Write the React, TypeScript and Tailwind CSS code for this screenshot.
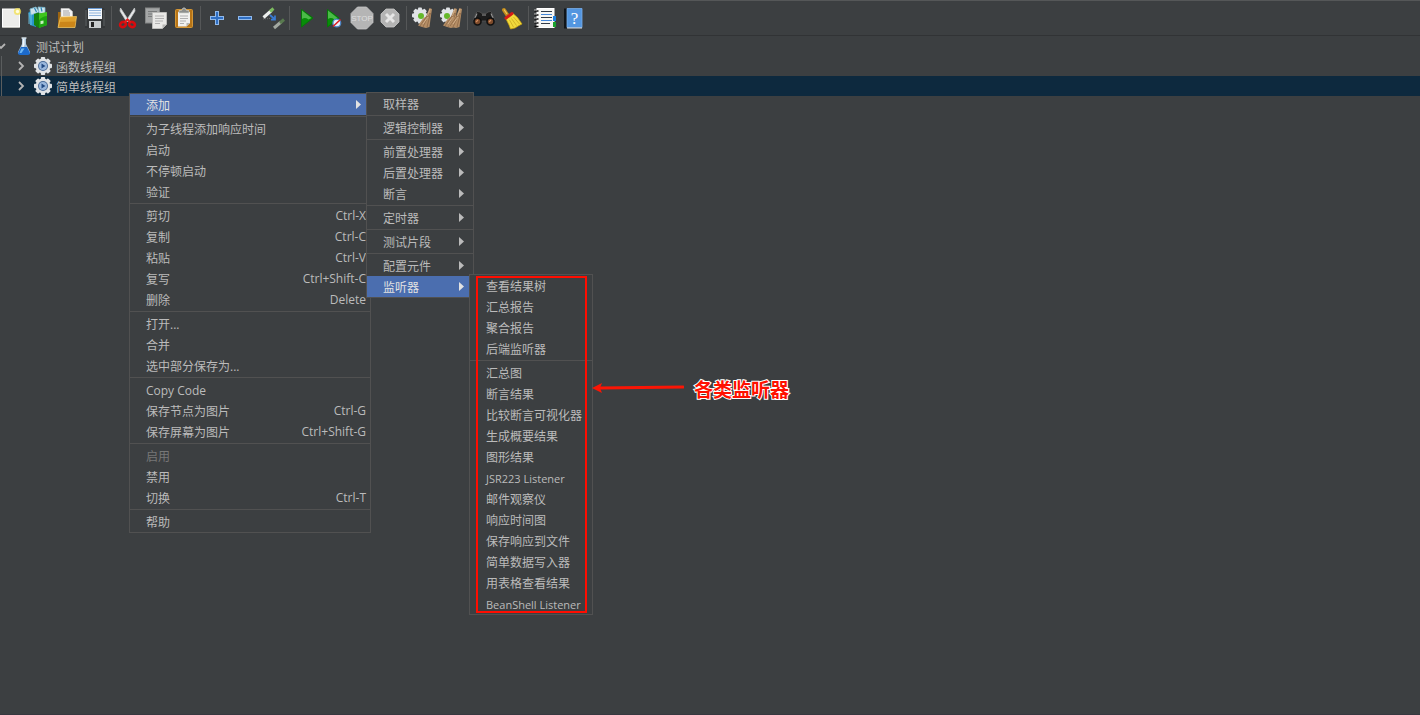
import type { ReactNode } from "react";
import clsx from "clsx";

interface MenuEntry {
  label: string;
  shortcut?: string;
  submenu?: boolean;
  selected?: boolean;
  disabled?: boolean;
  compact?: boolean;
}

const NODE_MENU: MenuEntry[][] = [
  [{ label: "添加", submenu: true, selected: true }],
  [{ label: "为子线程添加响应时间" }, { label: "启动" }, { label: "不停顿启动" }, { label: "验证" }],
  [
    { label: "剪切", shortcut: "Ctrl-X" },
    { label: "复制", shortcut: "Ctrl-C" },
    { label: "粘贴", shortcut: "Ctrl-V" },
    { label: "复写", shortcut: "Ctrl+Shift-C" },
    { label: "删除", shortcut: "Delete" },
  ],
  [{ label: "打开..." }, { label: "合并" }, { label: "选中部分保存为..." }],
  [
    { label: "Copy Code" },
    { label: "保存节点为图片", shortcut: "Ctrl-G" },
    { label: "保存屏幕为图片", shortcut: "Ctrl+Shift-G" },
  ],
  [{ label: "启用", disabled: true }, { label: "禁用" }, { label: "切换", shortcut: "Ctrl-T" }],
  [{ label: "帮助" }],
];

const ADD_MENU: MenuEntry[][] = [
  [{ label: "取样器", submenu: true }],
  [{ label: "逻辑控制器", submenu: true }],
  [
    { label: "前置处理器", submenu: true },
    { label: "后置处理器", submenu: true },
    { label: "断言", submenu: true },
  ],
  [{ label: "定时器", submenu: true }],
  [{ label: "测试片段", submenu: true }],
  [
    { label: "配置元件", submenu: true },
    { label: "监听器", submenu: true, selected: true },
  ],
];

const LISTENER_MENU: MenuEntry[][] = [
  [{ label: "查看结果树" }, { label: "汇总报告" }, { label: "聚合报告" }, { label: "后端监听器" }],
  [
    { label: "汇总图" },
    { label: "断言结果" },
    { label: "比较断言可视化器" },
    { label: "生成概要结果" },
    { label: "图形结果" },
    { label: "JSR223 Listener", compact: true },
    { label: "邮件观察仪" },
    { label: "响应时间图" },
    { label: "保存响应到文件" },
    { label: "简单数据写入器" },
    { label: "用表格查看结果" },
    { label: "BeanShell Listener", compact: true },
  ],
];

const GEAR_TEETH = [0, 45, 90, 135, 180, 225, 270, 315];

function Gear({ cx, cy, r }: { cx: number; cy: number; r: number }) {
  return (
    <g fill="#e0e3e6">
      {GEAR_TEETH.map((a) => (
        <rect
          key={a}
          x={cx - r * 0.24}
          y={cy - r}
          width={r * 0.48}
          height={r}
          rx="0.8"
          transform={`rotate(${a} ${cx} ${cy})`}
        />
      ))}
      <circle cx={cx} cy={cy} r={r * 0.82} />
    </g>
  );
}

function StrawBroom({ x = 0 }: { x?: number }) {
  return (
    <g transform={`translate(${x} 0)`}>
      <path d="M20.500 4 23 5l-1.500 10-1 8-3.500 1-4-1-4-1.500 5-7 3-2z" fill="#b58e66" />
      <path d="m20 9-9 13M20.500 9l-6.500 14M21.500 9l-3.500 14" stroke="#866141" strokeWidth=".7" />
      <path d="m21 5-2.500 7M19 13l-5 7" stroke="#d9b994" strokeWidth=".8" />
    </g>
  );
}

// Every toolbar drawing uses the 28px cell of its button as canvas.
const ICONS: Record<string, ReactNode> = {
  new: (
    <>
      <rect x="5.500" y="5" width="17" height="18" fill="#ededeb" stroke="#fff" />
      <path d="M5.500 23.500h17" stroke="#bdbdb8" />
      <circle cx="20.500" cy="7.500" r="3.600" fill="#f3e04f" opacity=".75" />
      <circle cx="20.500" cy="7.500" r="1.700" fill="#fffde0" />
    </>
  ),
  templates: (
    <>
      <path d="M3.500 8 11 6v17l-6-2z" fill="#2a95c9" />
      <path d="M4 9v11M6 9v12" stroke="#7cd0ef" strokeWidth=".8" />
      <path d="m5 5 6-2 3 5-8 3zM13 3l7 .5V10l-6-1z" fill="#cfe3ea" stroke="#78b9d2" strokeWidth=".8" />
      <path d="m9.500 4 2 4M16 3.500l1 4" stroke="#2785b7" strokeWidth="1.200" />
      <path d="M9 10 14 8.500V24l-5-3z" fill="#14820e" />
      <path d="m14 9.500 8-1.500v13l-8 3z" fill="#3fc51e" />
      <path d="M14 16q4-4 8-4v9l-8 3z" fill="#1ea312" />
      <path d="m15.500 17 3-.5v3l-3 .8z" fill="#c9efbf" />
    </>
  ),
  open: (
    <>
      <path d="M5 22V8h3l1 2h11v12z" fill="#9c6512" />
      <path d="M8 4.500h8l3.500 3V16H8z" fill="#f4f4f4" stroke="#c9c9c9" strokeWidth=".6" />
      <path d="M10 7h6M10 9h7M10 11h7" stroke="#999" strokeWidth=".9" />
      <path d="M7.500 13 23.500 12.500 22 23.500H5z" fill="#dfa02d" stroke="#f3cb69" strokeWidth=".7" />
      <path d="m7 18 15.500-.5-1 5.500H6z" fill="#cc8619" />
    </>
  ),
  save: (
    <>
      <path d="M5.500 4h17L24 5.500V24H4V5.500z" fill="#333638" />
      <path d="M5 6v16M23 6v16" stroke="#6d7173" strokeWidth=".8" />
      <rect x="7" y="4" width="14" height="11" fill="#f2f6fa" />
      <path d="M8 6.500h12M8 9h12M8 11.500h12" stroke="#90b4dd" />
      <path d="M7 4.500h14" stroke="#6999d3" />
      <rect x="8" y="17" width="12" height="7" fill="#c7cbcd" />
      <rect x="10" y="18" width="3" height="5" fill="#222" />
    </>
  ),
  cut: (
    <>
      <path d="m6.500 4 8.500 13-2.500.5L6 7zM20.500 4 12 17l2.500.5L21 7z" fill="#e9ebec" stroke="#c4c6c8" strokeWidth=".8" />
      <ellipse cx="9" cy="20.500" rx="3" ry="2.500" fill="none" stroke="#d80b0e" strokeWidth="2.600" transform="rotate(-25 9 20.500)" />
      <ellipse cx="18" cy="20.500" rx="3" ry="2.500" fill="none" stroke="#d80b0e" strokeWidth="2.600" transform="rotate(25 18 20.500)" />
      <path d="m10.500 18.500 3-3 3 3" fill="none" stroke="#e51b1b" strokeWidth="2" />
    </>
  ),
  copy: (
    <>
      <rect x="3.500" y="4" width="14" height="15" fill="#a4a6a6" stroke="#858787" />
      <path d="M6 7.500h9M6 10h6M6 12.500h5" stroke="#747676" strokeWidth=".9" />
      <path d="M10.500 8.500h14v12l-4 4h-10z" fill="#e9e9e7" stroke="#bcbcba" />
      <path d="M13 12h9M13 14.500h9M13 17h8M13 19.500h5" stroke="#a9a9a9" strokeWidth=".9" />
      <path d="M20.500 24.500v-4h4z" fill="#b5b5b3" />
    </>
  ),
  paste: (
    <>
      <rect x="5.500" y="5.500" width="17" height="18" rx="1" fill="#b87517" stroke="#d39635" />
      <path d="M8 8h12v11l-3.500 3.500H8z" fill="#f1f1ef" />
      <path d="M10 12h8M10 14.500h8M10 17h6M10 19.500h4" stroke="#a8a8a8" strokeWidth=".9" />
      <path d="M16.500 22.500V19H20z" fill="#b6b6b4" />
      <path d="M9 9V6.500h2.500L13 4h2l1.500 2.500H19V9z" fill="#8c8f8d" stroke="#d0d2cf" strokeWidth=".7" />
    </>
  ),
  expand: (
    <>
      <path d="M14 7v14M7 14h14" stroke="#8fb9ec" strokeWidth="4" />
      <path d="M14 8v12M8 14h12" stroke="#2f6fc4" strokeWidth="2" />
    </>
  ),
  collapse: (
    <>
      <path d="M7 14h14" stroke="#8fb9ec" strokeWidth="4" />
      <path d="M8 14h12" stroke="#2f6fc4" strokeWidth="2" />
    </>
  ),
  toggle: (
    <>
      <path d="m4.500 13.500 8-7" stroke="#edf0ee" strokeWidth="3" />
      <path d="m11 7.500 3.500-3" stroke="#7cbb5f" strokeWidth="3" />
      <path d="m11 11 5 4.500m0-4v4.200h-4" fill="none" stroke="#397bd5" strokeWidth="1.700" />
      <path d="m4 15 7-.5" stroke="#777" strokeWidth=".9" strokeDasharray="1 1" />
      <path d="m15 24 7-6" stroke="#a2a8a1" strokeWidth="3" />
      <path d="m21 19 4-3.500" stroke="#58794e" strokeWidth="3" />
    </>
  ),
  start: (
    <>
      <path d="m9.500 5.500 11.500 8.500-11.500 9z" fill="#078d08" stroke="#087609" />
      <path d="m10 6.500 9.500 7.500-3 1.500Q13 13 10 15z" fill="#4bbb48" />
    </>
  ),
  startNoPauses: (
    <>
      <path d="m7.500 5.500 11.500 8.500-11.500 9z" fill="#078d08" stroke="#087609" />
      <path d="m8 6.500 9.500 7.500-3 1.500Q11 13 8 15z" fill="#4bbb48" />
      <circle cx="16.800" cy="19" r="3.900" fill="#e8f0fa" stroke="#4e86c5" strokeWidth="1.300" />
      <path d="m13 22.500 7.500-7" stroke="#dd1c1c" strokeWidth="1.500" />
    </>
  ),
  stop: (
    <>
      <path d="M9.500 3h9L25 9.500v9L18.500 25h-9L3 18.500v-9z" fill="#b5b5b5" stroke="#c7c7c7" strokeWidth=".8" />
      <text
        x="14"
        y="17"
        textAnchor="middle"
        fontSize="8"
        fill="#dedede"
        fontFamily="Liberation Sans, sans-serif"
      >
        STOP
      </text>
    </>
  ),
  shutdown: (
    <>
      <path d="M10 5h8l5 5v8l-5 5h-8l-5-5v-8z" fill="#b4b4b4" stroke="#c9c9c9" strokeWidth=".8" />
      <path d="m10 10 8 8m0-8-8 8" stroke="#e6e6e6" strokeWidth="3" />
    </>
  ),
  clear: (
    <>
      <Gear cx={11} cy={11.5} r={8} />
      <circle cx="12" cy="12" r="3" fill="#65b82a" />
      <StrawBroom />
    </>
  ),
  clearAll: (
    <>
      <Gear cx={11} cy={11.5} r={8} />
      <circle cx="10" cy="12" r="3" fill="#65b82a" />
      <StrawBroom x={-3} />
      <StrawBroom x={2} />
    </>
  ),
  search: (
    <>
      <path d="M6 9q1-2.500 4-1l2 1.500h4L18 8q3-1.500 4 1l3 8-4 4-5-4h-4l-5 4-4-4z" fill="#1c1c1c" stroke="#555" strokeWidth=".8" />
      <path d="M7 9.500 5 14M21 9.500l2 4.500M12 11h4" stroke="#989898" strokeWidth="1.100" />
      <circle cx="7.500" cy="17.500" r="3.500" fill="#7c4a2a" stroke="#111" strokeWidth="1.600" />
      <circle cx="20.500" cy="17.500" r="3.500" fill="#7c4a2a" stroke="#111" strokeWidth="1.600" />
      <path d="m6 18 2-2M19 18l2-2" stroke="#d08a60" strokeWidth="1.200" />
    </>
  ),
  searchReset: (
    <>
      <path d="m6 6 4 6" stroke="#c08a1c" strokeWidth="4" strokeLinecap="round" />
      <path d="m6 5.500 3 4.500" stroke="#efc95c" strokeWidth="1.200" />
      <path d="m8 15 7-5.500 4.500 4L24 20l-3 1.500-4 2.500-4.500 1-1.500-4z" fill="#f1da3c" stroke="#caa00c" strokeWidth=".7" />
      <path d="m11.500 16 4 7M13.500 14.500l5 7M15.500 13l6 7" stroke="#c5a21c" strokeWidth=".7" />
      <path d="m8 14 6-4.500" stroke="#d31b17" strokeWidth="3" strokeLinecap="round" />
    </>
  ),
  functionHelper: (
    <>
      <rect x="6" y="4.500" width="17" height="19" fill="#f6f6f4" stroke="#fff" />
      <path d="M10 7.500h11M10 13.500h11M10 19.500h9" stroke="#333b47" />
      <path d="M10 10.500h11M10 16.500h11" stroke="#4386d8" />
      <path d="M3.500 7h4M3.500 11h4M3.500 15h4M3.500 19h4M3.500 22.500h4" stroke="#111" strokeWidth="1.600" />
      <path d="M3 6h3M3 10h3M3 14h3M3 18h3" stroke="#ddd" strokeWidth=".8" />
      <path d="M22 12h3v5h-3z" fill="#1c7fe0" />
      <path d="M22 18h3v5h-3z" fill="#1aa12d" />
    </>
  ),
  help: (
    <>
      <path d="M5 4.500h4v20H5z" fill="#101418" />
      <path d="M8 4.500h15v19H8z" fill="#5396e0" stroke="#78afea" strokeWidth=".8" />
      <path d="M8 24h15" stroke="#d6dbe0" />
      <text x="15.500" y="20" textAnchor="middle" fontSize="17" fill="#fff" fontFamily="Liberation Serif, serif">
        ?
      </text>
    </>
  ),
};

const TOOLBAR = [
  [
    { icon: "new", title: "新建" },
    { icon: "templates", title: "模板" },
    { icon: "open", title: "打开" },
    { icon: "save", title: "保存" },
  ],
  [
    { icon: "cut", title: "剪切" },
    { icon: "copy", title: "复制" },
    { icon: "paste", title: "粘贴" },
  ],
  [
    { icon: "expand", title: "全部展开" },
    { icon: "collapse", title: "全部折叠" },
    { icon: "toggle", title: "切换" },
  ],
  [
    { icon: "start", title: "启动" },
    { icon: "startNoPauses", title: "不停顿启动" },
    { icon: "stop", title: "停止" },
    { icon: "shutdown", title: "关闭" },
  ],
  [
    { icon: "clear", title: "清除" },
    { icon: "clearAll", title: "清除全部" },
  ],
  [
    { icon: "search", title: "查找" },
    { icon: "searchReset", title: "重置查找" },
  ],
  [
    { icon: "functionHelper", title: "函数助手" },
    { icon: "help", title: "帮助" },
  ],
];

function Toolbar() {
  return (
    <header className="h-9 overflow-hidden border-y border-t-[#555758] border-b-[#313335]">
      <div role="toolbar" className="-ml-[3px] flex h-full items-center">
        {TOOLBAR.map((group, i) => (
          <div key={i} className="flex items-center">
            {i > 0 && <div className="mx-0.5 h-6 w-px bg-[#555758]" />}
            {group.map((b) => (
              <button key={b.icon} type="button" title={b.title} aria-label={b.title} className="size-7">
                <svg viewBox="0 0 28 28" className="size-7" fill="none">
                  {ICONS[b.icon]}
                </svg>
              </button>
            ))}
          </div>
        ))}
      </div>
    </header>
  );
}

function Chevron({ open }: { open?: boolean }) {
  return (
    <svg viewBox="0 0 10 10" className="size-2.5 shrink-0" fill="none" stroke="#b4b4b4" strokeWidth="1.800">
      <path d={open ? "M1 3l4 4 4-4" : "M2 1l4 4-4 4"} />
    </svg>
  );
}

function FlaskIcon() {
  return (
    <svg viewBox="0 0 14 20" className="h-5 w-3.5 shrink-0">
      <path d="M5 2h4v6l4 8q.5 2-2 2H3q-2.500 0-2-2l4-8z" fill="#a9c3da" />
      <path d="M6 3h1.500v6L5 14z" fill="#f2f8fc" />
      <path d="M4 11h6l3 6q0 2-2 2H3q-2 0-2-2z" fill="#1c6acb" />
      <path d="M4.500 12.500h3l-3 4.500H2.500z" fill="#6eb7f3" />
      <path d="M4.500 2h5" stroke="#dfe8ee" strokeWidth="1.400" />
    </svg>
  );
}

function ThreadGroupIcon() {
  return (
    <svg viewBox="0 0 18 18" className="size-[18px] shrink-0">
      <Gear cx={9} cy={9} r={9} />
      <circle cx="9" cy="9" r="5" fill="#4a6b98" />
      <circle cx="9" cy="9" r="4" fill="#9bb8dd" />
      <path d="m7.500 6.500 4 2.500-4 2.500z" fill="#234b84" />
    </svg>
  );
}

function TestTree() {
  return (
    <ul role="tree">
      <li role="treeitem" aria-expanded="true">
        <div className="flex h-5 items-center">
          <div className="-ml-1 w-[21px]">
            <Chevron open />
          </div>
          <FlaskIcon />
          <span className="pt-1 pl-[5px]">测试计划</span>
        </div>
        <ul role="group">
          {["函数线程组", "简单线程组"].map((name, i) => (
            <li
              key={name}
              role="treeitem"
              aria-selected={i === 1}
              className={clsx("flex h-5 items-center", i === 1 && "bg-[#0d293e]")}
            >
              <span className="ml-px h-full w-4 border-l border-[#5a5d5e]" />
              <Chevron />
              <span className="flex items-center gap-1 pl-[7px]">
                <ThreadGroupIcon />
                <span className="pt-1">{name}</span>
              </span>
            </li>
          ))}
        </ul>
      </li>
    </ul>
  );
}

function PopupMenu({ groups, className }: { groups: MenuEntry[][]; className: string }) {
  return (
    <div role="menu" className={clsx("absolute border border-[#515151] bg-[#3c3f41]", className)}>
      {groups.map((group, i) => (
        <div key={i}>
          {i > 0 && <div role="separator" className="my-px h-px bg-[#515151]" />}
          {group.map((item) => (
            <button
              key={item.label}
              type="button"
              role="menuitem"
              disabled={item.disabled}
              className={clsx(
                "flex h-[21px] w-full items-center justify-between pr-1 pl-4 whitespace-nowrap",
                item.selected && "bg-[#4b6eaf] text-[#e2e2e2]",
                item.disabled && "text-[#777]"
              )}
            >
              <span className={clsx("pt-0.5", item.compact && "text-[11px] leading-4")}>{item.label}</span>
              {item.shortcut && <span>{item.shortcut}</span>}
              {item.submenu && (
                <svg viewBox="0 0 5 9" className="mr-[5px] h-[9px] w-[5px]" fill="currentColor">
                  <path d="M0 0v9l5-4.500z" />
                </svg>
              )}
            </button>
          ))}
        </div>
      ))}
    </div>
  );
}

function Callout() {
  return (
    <div className="absolute top-[376px] left-[592px] flex items-start gap-2.5">
      <svg viewBox="0 0 92 14" className="mt-1 h-3.5 w-[92px]">
        <path d="M8 8 91 7" stroke="#fb1505" strokeWidth="3" strokeLinecap="round" />
        <path d="M0 8 10 3 8 8l2 5z" fill="#fb1505" />
      </svg>
      <span className="text-[19px] leading-7 font-bold text-[#ff1000] [paint-order:stroke] [-webkit-text-stroke:2px_white]">
        各类监听器
      </span>
    </div>
  );
}

export default function App() {
  return (
    <div className="relative min-h-screen overflow-hidden border-b border-[#37373f] bg-[#3c3f41] font-['Open_Sans','Noto_Sans_CJK_SC',sans-serif] text-xs leading-4 text-[#bbb]">
      <Toolbar />
      <TestTree />
      <PopupMenu groups={NODE_MENU} className="top-[93px] left-[129px] w-[242px]" />
      <PopupMenu groups={ADD_MENU} className="top-[92px] left-[366px] w-[108px]" />
      <PopupMenu groups={LISTENER_MENU} className="top-[274px] left-[469px] w-[124px]" />
      <div className="pointer-events-none absolute top-[276px] left-[476px] h-[337px] w-[111px] border-2 border-[#ff0d00]" />
      <Callout />
    </div>
  );
}
